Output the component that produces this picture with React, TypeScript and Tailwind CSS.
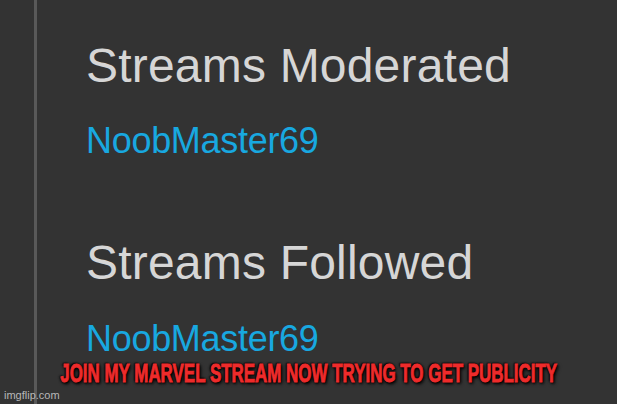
import {FunctionComponent} from "react";

const App: FunctionComponent = () => {
    return (
        <div className="relative w-[617px] h-[404px] overflow-hidden bg-[#333333] flex" style={{fontFamily: '"Liberation Sans", Arial, sans-serif'}}>
            <div className="w-[34px] shrink-0"/>
            <div className="w-[3px] h-full bg-[#595959] shrink-0"/>
            <div className="pl-[49px] pt-[38px] flex flex-col">
                <h2 className="text-[48px] leading-[56px] text-[#d6d6d6] tracking-[0.2px]">Streams Moderated</h2>
                <a className="mt-[27px] text-[36px] leading-[40px] text-[#18a8e0] tracking-[-0.3px]">NoobMaster69</a>
                <h2 className="mt-[74px] text-[48px] leading-[56px] text-[#d6d6d6] tracking-[0.2px]">Streams Followed</h2>
                <a className="mt-[28px] text-[36px] leading-[40px] text-[#18a8e0] tracking-[-0.3px]">NoobMaster69</a>
            </div>

            {/* meme caption */}
            <div className="absolute left-0 right-0 top-[361px] flex justify-center">
                <p
                    className="whitespace-nowrap text-[22px] leading-[26px] font-bold text-[#ee2b2b] uppercase scale-x-[0.77] scale-y-[1.15] [-webkit-text-stroke:0.8px_#ee2b2b] [text-shadow:0_0_3px_#000,1px_1px_2px_#000,-1px_-1px_2px_#000,2px_2px_4px_#000]"
                    style={{fontFamily: '"Liberation Sans", Arial, sans-serif'}}
                >
                    Join my marvel stream now trying to get publicity
                </p>
            </div>
            <div className="absolute left-[4px] bottom-[2px] text-[11px] leading-[14px] text-[#b8b8b8]">
                imgflip.com
            </div>
        </div>
    )
};

export default App;
